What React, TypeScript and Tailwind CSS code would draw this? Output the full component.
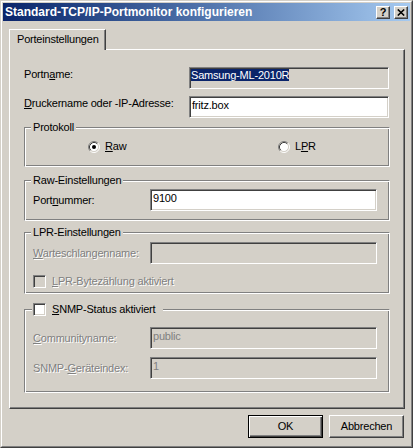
import React from "react";

const sunken =
  "border border-t-[#808080] border-l-[#808080] border-r-white border-b-white shadow-[inset_1px_1px_0_#404040,inset_-1px_-1px_0_#d4d0c8]";
const raised =
  "border border-t-white border-l-white border-r-[#404040] border-b-[#404040] shadow-[inset_-1px_-1px_0_#808080]";
const etched =
  "border border-t-[#808080] border-l-[#808080] border-r-white border-b-white shadow-[inset_1px_1px_0_#ffffff,inset_-1px_-1px_0_#808080]";
const disabledText = "text-[#808080] [text-shadow:1px_1px_0_#ffffff]";

function Radio({ checked }: { checked?: boolean }) {
  return (
    <svg width="12" height="12" viewBox="0 0 12 12" className="shrink-0">
      <circle cx="6" cy="6" r="4.5" fill="#ffffff" />
      <path d="M2.11 9.89 A5.5 5.5 0 0 1 9.89 2.11" fill="none" stroke="#808080" />
      <path d="M9.89 2.11 A5.5 5.5 0 0 1 2.11 9.89" fill="none" stroke="#ffffff" />
      <path d="M2.82 9.18 A4.5 4.5 0 0 1 9.18 2.82" fill="none" stroke="#404040" />
      <path d="M9.18 2.82 A4.5 4.5 0 0 1 2.82 9.18" fill="none" stroke="#d4d0c8" />
      {checked && <circle cx="6" cy="6" r="2" fill="#000000" />}
    </svg>
  );
}

function Checkbox({ disabled }: { disabled?: boolean }) {
  return (
    <div
      className={`w-[13px] h-[13px] shrink-0 ${sunken} ${
        disabled ? "bg-[#d4d0c8]" : "bg-white"
      }`}
    />
  );
}

function Field({
  className,
  children,
}: {
  className: string;
  children?: React.ReactNode;
}) {
  return (
    <div
      className={`${sunken} h-[22px] shrink-0 overflow-hidden whitespace-nowrap ${className}`}
    >
      {children}
    </div>
  );
}

function Legend({ children }: { children: React.ReactNode }) {
  return (
    <div className="-mt-[7px] ml-[6px] w-fit px-[2px] bg-[#d4d0c8] h-[13px]">
      {children}
    </div>
  );
}

function CaptionButton({ children }: { children: React.ReactNode }) {
  return (
    <div
      className={`w-[14px] h-[13px] flex items-center justify-center bg-[#d4d0c8] text-black ${raised}`}
    >
      {children}
    </div>
  );
}

export default function App() {
  return (
    <div className="w-[413px] h-[448px] bg-[#d4d0c8] border border-t-[#d4d0c8] border-l-[#d4d0c8] border-r-[#404040] border-b-[#404040] font-['Liberation_Sans',Arial,sans-serif] text-[11px] leading-[13px] tracking-[-0.2px] text-black select-none">
      <div className="h-full border border-t-white border-l-white border-r-[#808080] border-b-[#808080] p-px flex flex-col">
        {/* Title bar */}
        <div className="h-[18px] shrink-0 flex items-center justify-between bg-linear-to-r from-[#0a246a] to-[#a6caf0] pl-[2px] pr-[2px]">
          <span className="text-white font-bold text-[12px] tracking-normal">
            Standard-TCP/IP-Portmonitor konfigurieren
          </span>
          <div className="flex gap-[4px]">
            <CaptionButton>
              <span className="font-bold text-[11px] leading-none tracking-normal">?</span>
            </CaptionButton>
            <CaptionButton>
              <svg width="8" height="7" viewBox="0 0 8 7">
                <path d="M0.8 0.5 L7.2 6.5 M7.2 0.5 L0.8 6.5" stroke="#000000" strokeWidth="1.6" />
              </svg>
            </CaptionButton>
          </div>
        </div>

        <div className="pl-[6px] pt-[8px]">
          {/* Tab */}
          <div className="relative z-10 -mb-px w-[97px] h-[21px] bg-[#d4d0c8] border-t border-l border-r border-t-white border-l-white border-r-[#404040] shadow-[inset_-1px_0_0_#808080] pl-[7px] pt-[3px]">
            Porteinstellungen
          </div>

          {/* Panel */}
          <div className="w-[396px] h-[360px] border border-t-white border-l-white border-r-[#404040] border-b-[#404040] shadow-[inset_-1px_-1px_0_#808080] pl-[14px] pt-[17px]">
            <div className="flex items-start">
              <span className="w-[165px] pt-[1px]">
                Portn<u>a</u>me:
              </span>
              <Field className="w-[200px] bg-[#d4d0c8] pt-[1px] pl-px">
                <span className="bg-[#0a246a] text-white">Samsung-ML-2010R</span>
              </Field>
            </div>

            <div className="flex items-start mt-[7px]">
              <span className="w-[165px] pt-[1px]">
                <u>D</u>ruckername oder -IP-Adresse:
              </span>
              <Field className="w-[200px] bg-white pt-[2px] pl-[2px]">fritz.box</Field>
            </div>

            {/* Protokoll */}
            <div className={`${etched} w-[366px] mt-[9px]`}>
              <Legend>Protokoll</Legend>
              <div className="flex items-center pl-[63px] pt-[6px] pb-[13px]">
                <div className="flex items-center gap-[5px] w-[190px]">
                  <Radio checked />
                  <span>
                    <u>R</u>aw
                  </span>
                </div>
                <div className="flex items-center gap-[5px]">
                  <Radio />
                  <span>
                    L<u>P</u>R
                  </span>
                </div>
              </div>
            </div>

            {/* Raw-Einstellungen */}
            <div className={`${etched} w-[366px] mt-[13px]`}>
              <Legend>Raw-Einstellungen</Legend>
              <div className="flex items-start pl-[8px] pt-[2px] pb-[9px]">
                <span className="w-[117px] pt-[5px]">
                  Port<u>n</u>ummer:
                </span>
                <Field className="w-[227px] bg-white pt-[2px] pl-[2px]">9100</Field>
              </div>
            </div>

            {/* LPR-Einstellungen */}
            <div className={`${etched} w-[366px] mt-[11px]`}>
              <Legend>LPR-Einstellungen</Legend>
              <div className="pl-[8px] pt-[3px] pb-[5px]">
                <div className="flex items-start">
                  <span className={`w-[117px] pt-[5px] ${disabledText}`}>
                    <u>W</u>arteschlangenname:
                  </span>
                  <Field className="w-[227px] bg-[#d4d0c8]" />
                </div>
                <div className="flex items-center gap-[6px] mt-[11px] h-[13px]">
                  <Checkbox disabled />
                  <span className={disabledText}>
                    <u>L</u>PR-Bytezählung aktiviert
                  </span>
                </div>
              </div>
            </div>

            {/* SNMP */}
            <div className={`${etched} w-[366px] mt-[15px]`}>
              <div className="-mt-[7px] ml-[7px] w-fit pl-px pr-[8px] bg-[#d4d0c8] flex items-center gap-[6px] h-[13px]">
                <Checkbox />
                <span>
                  <u>S</u>NMP-Status aktiviert
                </span>
              </div>
              <div className="pl-[8px] pt-[11px] pb-[13px]">
                <div className="flex items-start">
                  <span className={`w-[117px] pt-[5px] ${disabledText}`}>
                    <u>C</u>ommunityname:
                  </span>
                  <Field className="w-[227px] bg-[#d4d0c8] text-[#808080] pt-[2px] pl-[2px]">
                    public
                  </Field>
                </div>
                <div className="flex items-start mt-[8px]">
                  <span className={`w-[117px] pt-[5px] ${disabledText}`}>
                    SNMP-<u>G</u>eräteindex:
                  </span>
                  <Field className="w-[227px] bg-[#d4d0c8] text-[#808080] pt-[2px] pl-[2px]">
                    1
                  </Field>
                </div>
              </div>
            </div>
          </div>

          {/* Buttons */}
          <div className="w-[396px] flex justify-end gap-[6px] pr-px mt-[6px]">
            <button className="w-[75px] h-[23px] flex items-center justify-center bg-[#d4d0c8] border border-black shadow-[inset_1px_1px_0_#ffffff,inset_-1px_-1px_0_#404040,inset_-2px_-2px_0_#808080]">
              OK
            </button>
            <button className={`w-[75px] h-[23px] flex items-center justify-center bg-[#d4d0c8] ${raised}`}>
              Abbrechen
            </button>
          </div>
        </div>
      </div>
    </div>
  );
}
